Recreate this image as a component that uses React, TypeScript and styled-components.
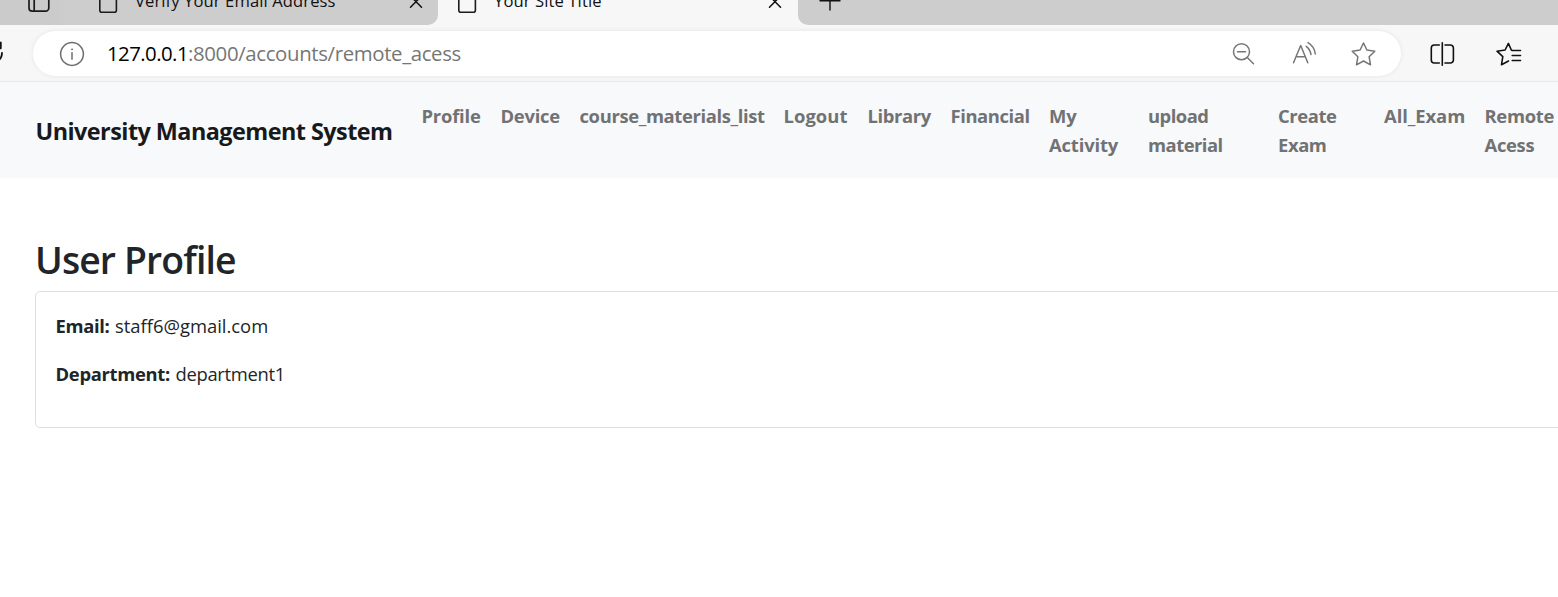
import React from "react";
import styled, { createGlobalStyle } from "styled-components";

const GlobalStyle = createGlobalStyle`
  *, *::before, *::after { box-sizing: border-box; }
  html, body { margin: 0; background: #fff; overflow: hidden; }
  body { font-family: "Open Sans", "Noto Sans", sans-serif; color: #212529; }
  h1, p { margin: 0; font-weight: inherit; }
`;

const Page = styled.div`
  width: 1558px;
  height: 597px;
  overflow: hidden;
  background: #fff;
`;

const TabStrip = styled.div`
  height: 25px;
  display: flex;
  background: #f7f7f7;
  overflow: hidden;
`;

const StripStart = styled.div`
  width: 79px;
  height: 25px;
  padding-left: 27px;
  background: linear-gradient(to right, #cbcbcb 70%, #cdcdcd);
`;

const Tab = styled.div<{ $active?: boolean }>`
  width: ${(p) => (p.$active ? 360 : 359)}px;
  height: 25px;
  display: flex;
  align-items: flex-start;
  padding-left: 18px;
  background: ${(p) => (p.$active ? "#f7f7f7" : "#cdcdcd")};
  border-bottom-right-radius: ${(p) => (p.$active ? 0 : "10px")};
`;

const TabTitle = styled.span<{ $track: number }>`
  width: 274px;
  margin: -11px 0 0 16px;
  font-size: 16.6px;
  line-height: 24px;
  letter-spacing: ${(p) => p.$track}px;
  white-space: nowrap;
  color: #111;
`;

const StripEnd = styled.div`
  flex: 1;
  height: 25px;
  padding-left: 20px;
  background: #cdcdcd;
  border-bottom-left-radius: 10px;
`;

const Toolbar = styled.div`
  height: 57px;
  display: flex;
  align-items: flex-start;
  padding-top: 6px;
  background: #f7f7f7;
  border-bottom: 1px solid #e6e8ea;
`;

const ReloadSlot = styled.div`
  width: 33px;
  height: 45px;
`;

const AddressBar = styled.div`
  width: 1368px;
  height: 45px;
  display: flex;
  align-items: center;
  padding: 0 23px 0 26px;
  border-radius: 23px;
  background: #fff;
  box-shadow: 0 0 5px rgba(0, 0, 0, 0.08);
`;

const Url = styled.div`
  flex: 1;
  margin: -2px 0 0 22px;
  font-size: 20.4px;
  line-height: 28px;
  white-space: nowrap;
`;

const UrlPart = styled.span<{ $color: string; $track: number }>`
  color: ${(p) => p.$color};
  letter-spacing: ${(p) => p.$track}px;
`;

const AddressActions = styled.div`
  display: flex;
  gap: 32px;
`;

const ToolbarActions = styled.div`
  display: flex;
  align-items: center;
  gap: 39px;
  height: 45px;
  margin-left: 27px;
`;

const Icon = styled.svg`
  display: block;
  flex: none;
  fill: none;
  stroke-linecap: round;
  stroke-linejoin: round;
`;

const Navbar = styled.nav`
  height: 96px;
  display: flex;
  padding-left: 35.5px;
  background: #f8f9fb;
`;

const Brand = styled.div`
  width: 386px;
  flex: none;
  padding-top: 31px;
  font-size: 23.4px;
  font-weight: 700;
  line-height: 36px;
  letter-spacing: -0.54px;
  white-space: nowrap;
  color: #17191b;
`;

const NavLinks = styled.div`
  display: flex;
  padding-top: 19px;
`;

const NavLink = styled.a<{ $width: number; $track: number }>`
  width: ${(p) => p.$width}px;
  flex: none;
  font-size: 18.4px;
  font-weight: 700;
  line-height: 29px;
  letter-spacing: ${(p) => p.$track}px;
  white-space: pre-line;
  color: #717273;
`;

const Content = styled.main`
  padding: 59px 0 0 35px;
`;

const Heading = styled.h1`
  font-size: 37.4px;
  font-weight: 600;
  line-height: 46px;
  letter-spacing: -0.88px;
  color: #212529;
`;

const Card = styled.section`
  width: 1540px;
  height: 137px;
  margin-top: 8px;
  padding: 19px 19.5px;
  border: 1px solid #dfdfdf;
  border-radius: 5px;
`;

const Field = styled.p`
  height: 29px;
  margin-bottom: 19px;
  display: flex;
  font-size: 18.4px;
  line-height: 29px;
  white-space: nowrap;
`;

const Label = styled.strong<{ $width: number; $track: number }>`
  width: ${(p) => p.$width}px;
  font-weight: 700;
  letter-spacing: ${(p) => p.$track}px;
`;

const Value = styled.span<{ $track: number }>`
  letter-spacing: ${(p) => p.$track}px;
`;

const links = [
  { text: "Profile", width: 79, track: -0.2 },
  { text: "Device", width: 79, track: -0.25 },
  { text: "course_materials_list", width: 204, track: -0.35 },
  { text: "Logout", width: 84, track: 0.05 },
  { text: "Library", width: 83, track: -0.35 },
  { text: "Financial", width: 98.5, track: -0.4 },
  { text: "My\nActivity", width: 99, track: -0.15 },
  { text: "upload\nmaterial", width: 130, track: -0.5 },
  { text: "Create\nExam", width: 106, track: -0.4 },
  { text: "All_Exam", width: 100.5, track: -0.05 },
  { text: "Remote\nAcess", width: 80, track: -0.3 },
];

const PageIcon = () => (
  <Icon width="22" height="14" viewBox="0 0 22 14" stroke="#1b1b1b" strokeWidth="1.6">
    <path d="M2.8 -8V10.2a2 2 0 0 0 2 2h12.6a2 2 0 0 0 2-2V-8" />
  </Icon>
);

const CloseIcon = () => (
  <Icon width="14" height="10" viewBox="0 0 14 10" stroke="#111" strokeWidth="1.5">
    <path d="M1.5 -4 12.5 7.3M12.5 -4 1.5 7.3" />
  </Icon>
);

export default function App() {
  return (
    <Page>
      <GlobalStyle />
      <TabStrip>
        <StripStart>
          <Icon width="24" height="14" viewBox="0 0 24 14" stroke="#1b1b1b" strokeWidth="1.7">
            <path d="M2 -6V8a3.2 3.2 0 0 0 3.2 3.2h13.4A3.2 3.2 0 0 0 21.8 8V-6M7.2 -6V11" />
          </Icon>
        </StripStart>
        <Tab>
          <PageIcon />
          <TabTitle $track={0.1}>Verify Your Email Address</TabTitle>
          <CloseIcon />
        </Tab>
        <Tab $active>
          <PageIcon />
          <TabTitle $track={0.1}>Your Site Title</TabTitle>
          <CloseIcon />
        </Tab>
        <StripEnd>
          <Icon width="24" height="12" viewBox="0 0 24 12" stroke="#111" strokeWidth="1.4">
            <path d="M2 .7H22M12 -9V10" />
          </Icon>
        </StripEnd>
      </TabStrip>
      <Toolbar>
        <ReloadSlot>
          <Icon width="6" height="45" viewBox="0 0 6 45" stroke="#111" strokeWidth="1.8">
            <path d="M.8 11.5V17.3H-4M2 21.8C2 25.5 .8 28 -2 29.6" />
          </Icon>
        </ReloadSlot>
        <AddressBar>
          <Icon width="26" height="26" viewBox="0 0 26 26" stroke="#6d6d6d" strokeWidth="1.5">
            <circle cx="13" cy="13" r="11.4" />
            <path d="M13 11.7V18.3" />
            <circle cx="13" cy="8.3" r=".5" fill="#6d6d6d" strokeWidth="1" />
          </Icon>
          <Url>
            <UrlPart $color="#000" $track={-0.56}>127.0.0.1</UrlPart>
            <UrlPart $color="#767676" $track={-0.36}>:8000/accounts/remote_acess</UrlPart>
          </Url>
          <AddressActions>
            <Icon width="28" height="28" viewBox="0 0 28 28" stroke="#767676" strokeWidth="1.5">
              <circle cx="11.5" cy="11.7" r="8" />
              <path d="M7.5 11.7H15.5M17.3 17.5 23.5 23.7" />
            </Icon>
            <Icon width="28" height="28" viewBox="0 0 28 28" stroke="#767676" strokeWidth="1.5">
              <path d="M3.5 22.7 10.7 5.5 17.8 22.7M6.2 16.7H15.2M16.2 6.3Q20 9 21 14.5M18 2.6Q24.5 6.5 25.3 14" />
            </Icon>
            <Icon width="28" height="28" viewBox="0 0 28 28" stroke="#767676" strokeWidth="1.5">
              <path d="M13.5 3 16.9 10 24.8 11.2 19.1 16.7 20.5 24.8 13.5 21 6.5 24.8 7.9 16.7 2.2 11.2 10.1 10Z" />
            </Icon>
          </AddressActions>
        </AddressBar>
        <ToolbarActions>
          <Icon width="28" height="28" viewBox="0 0 28 28" stroke="#111" strokeWidth="1.6">
            <path d="M14.3 2.7V25.3M11.3 5H6.3a3 3 0 0 0-3 3v12A3 3 0 0 0 6.3 23h5M17 5h5.4a3 3 0 0 1 3 3v12A3 3 0 0 1 22.4 23h-5.4" />
          </Icon>
          <Icon width="28" height="28" viewBox="0 0 28 28" stroke="#111" strokeWidth="1.6">
            <path d="M17.2 10.5 16.2 9.8 13.4 3.4 10.1 10 2 11.2 7.8 16.7 6.5 24.8 13.5 21M17.2 15.5H25.5M17.2 20.5H25.5M17.2 10.5H25.5" />
          </Icon>
        </ToolbarActions>
      </Toolbar>
      <Navbar>
        <Brand>University Management System</Brand>
        <NavLinks>
          {links.map((l) => (
            <NavLink key={l.text} $width={l.width} $track={l.track}>{l.text}</NavLink>
          ))}
        </NavLinks>
      </Navbar>
      <Content>
        <Heading>User Profile</Heading>
        <Card>
          <Field>
            <Label $width={59.5} $track={-0.35}>Email:</Label>
            <Value $track={0}>staff6@gmail.com</Value>
          </Field>
          <Field>
            <Label $width={120} $track={-0.3}>Department:</Label>
            <Value $track={-0.3}>department1</Value>
          </Field>
        </Card>
      </Content>
    </Page>
  );
}
